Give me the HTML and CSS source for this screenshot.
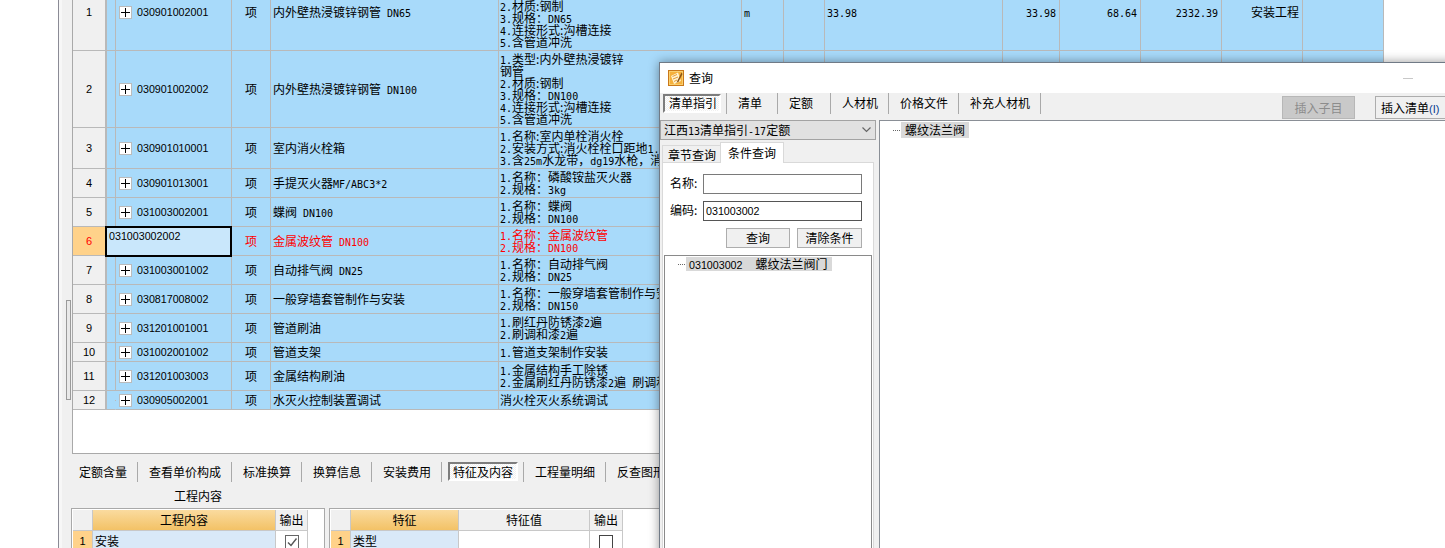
FILE: index.html
```html
<!DOCTYPE html>
<html lang="zh-CN">
<head>
<meta charset="utf-8">
<title>查询</title>
<link rel="stylesheet" href="styles.css">
</head>
<body>
<div class="app">
  <div class="gutter"></div>
  <div class="frame">
    <div class="strip"><div class="strip-thumb"></div></div>
    <div class="main">
      <div class="grid-box">
        <table class="grid">
          <colgroup>
            <col class="c-num"><col class="c-ind"><col class="c-code"><col class="c-unit"><col class="c-name"><col class="c-desc"><col class="c-u2"><col class="c-q1"><col class="c-q2"><col class="c-q3"><col class="c-p"><col class="c-t"><col class="c-k"><col class="c-e">
          </colgroup>
          <tr class="h77">
            <td class="num">1</td><td class="ind"><span class="tick"></span></td>
            <td class="code"><span class="plus"></span>030901002001</td><td class="ctr">项</td>
            <td>内外壁热浸镀锌钢管<i class="m"> DN65</i></td>
            <td class="desc"><i class="m">1.</i>类型:内外壁热浸镀锌<br>钢管<br><i class="m">2.</i>材质:钢制<br><i class="m">3.</i>规格：<i class="m">DN65</i><br><i class="m">4.</i>连接形式:沟槽连接<br><i class="m">5.</i>含管道冲洗</td>
            <td class="lft"><i class="m">m</i></td><td></td><td class="lft"><i class="m">33.98</i></td>
            <td class="rgt"><i class="m">33.98</i></td><td class="rgt"><i class="m">68.64</i></td><td class="rgt"><i class="m">2332.39</i></td><td class="rgt">安装工程</td><td></td>
          </tr>
          <tr class="h77">
            <td class="num">2</td><td class="ind"><span class="tick"></span></td>
            <td class="code"><span class="plus"></span>030901002002</td><td class="ctr">项</td>
            <td>内外壁热浸镀锌钢管<i class="m"> DN100</i></td>
            <td class="desc"><i class="m">1.</i>类型:内外壁热浸镀锌<br>钢管<br><i class="m">2.</i>材质:钢制<br><i class="m">3.</i>规格：<i class="m">DN100</i><br><i class="m">4.</i>连接形式:沟槽连接<br><i class="m">5.</i>含管道冲洗</td>
            <td></td><td></td><td></td><td></td><td></td><td></td><td></td><td></td>
          </tr>
          <tr class="h41">
            <td class="num">3</td><td class="ind"><span class="tick"></span></td>
            <td class="code"><span class="plus"></span>030901010001</td><td class="ctr">项</td>
            <td>室内消火栓箱</td>
            <td class="desc"><i class="m">1.</i>名称:室内单栓消火栓<br><i class="m">2.</i>安装方式:消火栓栓口距地<i class="m">1.1m</i><br><i class="m">3.</i>含<i class="m">25m</i>水龙带，<i class="m">dg19</i>水枪，消防按钮</td>
            <td></td><td></td><td></td><td></td><td></td><td></td><td></td><td></td>
          </tr>
          <tr class="h29">
            <td class="num">4</td><td class="ind"><span class="tick"></span></td>
            <td class="code"><span class="plus"></span>030901013001</td><td class="ctr">项</td>
            <td>手提灭火器<i class="m">MF/ABC3*2</i></td>
            <td class="desc"><i class="m">1.</i>名称：磷酸铵盐灭火器<br><i class="m">2.</i>规格：<i class="m">3kg</i></td>
            <td></td><td></td><td></td><td></td><td></td><td></td><td></td><td></td>
          </tr>
          <tr class="h29">
            <td class="num">5</td><td class="ind"><span class="tick"></span></td>
            <td class="code"><span class="plus"></span>031003002001</td><td class="ctr">项</td>
            <td>蝶阀<i class="m"> DN100</i></td>
            <td class="desc"><i class="m">1.</i>名称：蝶阀<br><i class="m">2.</i>规格：<i class="m">DN100</i></td>
            <td></td><td></td><td></td><td></td><td></td><td></td><td></td><td></td>
          </tr>
          <tr class="h29 active">
            <td class="num">6</td>
            <td class="editing" colspan="2">031003002002</td><td class="ctr">项</td>
            <td>金属波纹管<i class="m"> DN100</i></td>
            <td class="desc"><i class="m">1.</i>名称：金属波纹管<br><i class="m">2.</i>规格：<i class="m">DN100</i></td>
            <td></td><td></td><td></td><td></td><td></td><td></td><td></td><td></td>
          </tr>
          <tr class="h29">
            <td class="num">7</td><td class="ind"><span class="tick"></span></td>
            <td class="code"><span class="plus"></span>031003001002</td><td class="ctr">项</td>
            <td>自动排气阀<i class="m"> DN25</i></td>
            <td class="desc"><i class="m">1.</i>名称：自动排气阀<br><i class="m">2.</i>规格：<i class="m">DN25</i></td>
            <td></td><td></td><td></td><td></td><td></td><td></td><td></td><td></td>
          </tr>
          <tr class="h29">
            <td class="num">8</td><td class="ind"><span class="tick"></span></td>
            <td class="code"><span class="plus"></span>030817008002</td><td class="ctr">项</td>
            <td>一般穿墙套管制作与安装</td>
            <td class="desc"><i class="m">1.</i>名称：一般穿墙套管制作与安装<br><i class="m">2.</i>规格：<i class="m">DN150</i></td>
            <td></td><td></td><td></td><td></td><td></td><td></td><td></td><td></td>
          </tr>
          <tr class="h29">
            <td class="num">9</td><td class="ind"><span class="tick"></span></td>
            <td class="code"><span class="plus"></span>031201001001</td><td class="ctr">项</td>
            <td>管道刷油</td>
            <td class="desc"><i class="m">1.</i>刷红丹防锈漆<i class="m">2</i>遍<br><i class="m">2.</i>刷调和漆<i class="m">2</i>遍</td>
            <td></td><td></td><td></td><td></td><td></td><td></td><td></td><td></td>
          </tr>
          <tr class="h19">
            <td class="num">10</td><td class="ind"><span class="tick"></span></td>
            <td class="code"><span class="plus"></span>031002001002</td><td class="ctr">项</td>
            <td>管道支架</td>
            <td class="desc"><i class="m">1.</i>管道支架制作安装</td>
            <td></td><td></td><td></td><td></td><td></td><td></td><td></td><td></td>
          </tr>
          <tr class="h29">
            <td class="num">11</td><td class="ind"><span class="tick"></span></td>
            <td class="code"><span class="plus"></span>031201003003</td><td class="ctr">项</td>
            <td>金属结构刷油</td>
            <td class="desc"><i class="m">1.</i>金属结构手工除锈<br><i class="m">2.</i>金属刷红丹防锈漆<i class="m">2</i>遍<i class="m"> </i>刷调和漆<i class="m">2</i>遍</td>
            <td></td><td></td><td></td><td></td><td></td><td></td><td></td><td></td>
          </tr>
          <tr class="h19">
            <td class="num">12</td><td class="ind last"><span class="tick"></span></td>
            <td class="code"><span class="plus"></span>030905002001</td><td class="ctr">项</td>
            <td>水灭火控制装置调试</td>
            <td class="desc">消火栓灭火系统调试</td>
            <td></td><td></td><td></td><td></td><td></td><td></td><td></td><td></td>
          </tr>
        </table>
      </div>

      <div class="lower">
        <div class="tabs">
          <span class="tab">定额含量</span>
          <span class="tab">查看单价构成</span>
          <span class="tab">标准换算</span>
          <span class="tab">换算信息</span>
          <span class="tab">安装费用</span>
          <span class="tab pressed">特征及内容</span>
          <span class="tab">工程量明细</span>
          <span class="tab">反查图形</span>
        </div>
        <div class="section-title">工程内容</div>
        <div class="subgrids">
          <div class="subgrid sg-left">
            <table class="mini">
              <colgroup><col class="w20"><col class="w183"><col class="w31"></colgroup>
              <tr><th></th><th class="gold">工程内容</th><th>输出</th></tr>
              <tr><td class="rn">1</td><td class="val">安装</td><td class="chk"><span class="box on"><svg viewBox="0 0 12 12" width="12" height="12"><path d="M2 6.500 L5 9.500 L10.500 2.500" fill="none" stroke="#555" stroke-width="1.400"/></svg></span></td></tr>
            </table>
          </div>
          <div class="subgrid sg-right">
            <table class="mini">
              <colgroup><col class="w20"><col class="w108"><col class="w131"><col class="w33"></colgroup>
              <tr><th></th><th class="gold">特征</th><th>特征值</th><th>输出</th></tr>
              <tr><td class="rn">1</td><td class="val">类型</td><td class="blank"></td><td class="chk"><span class="box"></span></td></tr>
            </table>
          </div>
        </div>
      </div>
    </div>
  </div>
</div>

<div class="dialog">
  <div class="titlebar">
    <svg class="app-icon" viewBox="0 0 16 16" width="16" height="16">
      <rect x="0.500" y="0.500" width="15" height="15" fill="#f5b03c" stroke="#c9781a"/>
      <rect x="1.500" y="1.500" width="13" height="13" fill="none" stroke="#f9cf6e"/>
      <path d="M3 6 L10 2.500 L13 11 L6 14 Z" fill="#fff4d2"/>
      <path d="M4.500 6.500 L9 4.500 M5 9 L10 7 M6 11.500 L9 10" stroke="#e39a3a" stroke-width="1"/>
      <path d="M13.500 2.500 L9.500 10.500 L8.500 13 L10.800 11.300 L14.500 4 Z" fill="#8a5518"/>
    </svg>
    <span class="title-text">查询</span>
    <span class="minimize"></span>
  </div>
  <div class="toolbar">
    <span class="tool pressed-tool">清单指引</span>
    <span class="tool wide">清单</span>
    <span class="tool wider">定额</span>
    <span class="tool">人材机</span>
    <span class="tool">价格文件</span>
    <span class="tool">补充人材机</span>
    <button class="btn btn-off" type="button">插入子目</button>
    <button class="btn btn-on" type="button">插入清单<span class="hot">(I)</span></button>
  </div>
  <div class="dlg-body">
    <div class="dlg-left">
      <div class="select">
        <span>江西<i class="m">13</i>清单指引<i class="m">-17</i>定额</span>
        <svg viewBox="0 0 9 6" width="9" height="6"><path d="M0.500 0.500 L4.500 4.500 L8.500 0.500" fill="none" stroke="#666" stroke-width="1.200"/></svg>
      </div>
      <div class="qtabs">
        <span class="qtab">章节查询</span>
        <span class="qtab qtab-on">条件查询</span>
      </div>
      <div class="panel">
        <div class="field"><label class="flabel">名称:</label><input class="finput" type="text" value=""></div>
        <div class="field"><label class="flabel">编码:</label><input class="finput focus" type="text" value="031003002"></div>
        <div class="actions">
          <button class="btn act a-query" type="button">查询</button>
          <button class="btn act a-clear" type="button">清除条件</button>
        </div>
        <div class="result">
          <div class="result-row"><span class="dots"></span><span class="hit"><span class="sans">031003002</span><span class="hit-name">螺纹法兰阀门</span></span></div>
        </div>
      </div>
    </div>
    <div class="dlg-right">
      <div class="result-row right-row"><span class="dots"></span><span class="hit hit-r">螺纹法兰阀</span></div>
    </div>
  </div>
</div>
</body>
</html>
```

FILE: styles.css
```css
* { box-sizing: border-box; }
html, body { margin: 0; padding: 0; height: 548px; overflow: hidden; background: #fff; }
body {
  font-family: "Noto Sans CJK SC", "Liberation Sans", sans-serif;
  font-size: 12px;
  line-height: 12px;
  color: #000;
  position: relative;
}
.m {
  font-family: "DejaVu Sans Mono", "Liberation Mono", monospace;
  font-size: 10px;
  line-height: 8px;
  font-style: normal;
  white-space: pre;
}
.sans { font-family: "Liberation Sans", sans-serif; font-size: 10.7px; line-height: 8px; }

.app { display: flex; height: 548px; overflow: hidden; }
.gutter { width: 58px; flex: none; }
.frame { flex: 1; display: flex; min-width: 0; }
.strip {
  width: 14px; flex: none;
  border-left: 1px solid #8b8b95;
  background: linear-gradient(to right, #f7f7f7 0 3px, #f0f0f0 3px);
  padding: 300px 0 0 7px;
}
.strip-thumb { width: 5px; height: 100px; border: 1px solid #9a9a9a; background: #e9e9e9; }

.main { flex: 1; min-width: 0; display: flex; flex-direction: column; background: #f0f0f0; }
.grid-box {
  margin-top: -26px;
  height: 480px;
  flex: none;
  background: #fff;
  border-left: 1px solid #a9a9a9;
  border-bottom: 1px solid #a9a9a9;
  overflow: hidden;
}
.grid { table-layout: fixed; width: 1311px; border-collapse: separate; border-spacing: 0; }
.c-num { width: 34px; } .c-ind { width: 9px; } .c-code { width: 116px; } .c-unit { width: 39px; }
.c-name { width: 228px; } .c-desc { width: 243px; } .c-u2 { width: 42px; } .c-q1 { width: 41px; }
.c-q2 { width: 178px; } .c-q3 { width: 57px; } .c-p { width: 81px; } .c-t { width: 81px; }
.c-k { width: 81px; } .c-e { width: 81px; }

.grid td {
  background: #a8dafa;
  border-right: 1px solid #b9b9b9;
  border-bottom: 1px solid #b9b9b9;
  padding: 0 2px;
  white-space: nowrap;
  overflow: hidden;
  vertical-align: middle;
}
.h77 td { height: 77px; } .h41 td { height: 41px; } .h29 td { height: 29px; } .h19 td { height: 19px; }
.grid td.num {
  background: #f0f0f0;
  text-align: center;
  border-right: 2px solid #b9b9b9;
  font-family: "Liberation Sans", sans-serif;
  font-size: 11px;
}
.grid td.ind { position: relative; overflow: visible; padding: 0; }
.tick { display: block; position: absolute; right: -5px; top: 50%; width: 5px; border-top: 1px solid #b9b9b9; }
.grid td.ind.last { border-right-color: #a8dafa; }
.grid td.code {
  font-family: "Liberation Sans", sans-serif;
  font-size: 10.7px;
  padding: 0 0 0 3px;
  position: relative;
}
.plus {
  display: inline-block;
  width: 13px; height: 13px;
  margin-right: 5px;
  vertical-align: -3px;
  border: 1px solid #bbb;
  background:
    linear-gradient(#000, #000) center / 9px 1px no-repeat,
    linear-gradient(#000, #000) center / 1px 9px no-repeat,
    #fff;
}
.grid td.ctr { text-align: center; }
.grid td.desc { padding-left: 1px; }
.grid td.lft { padding-left: 2px; }
.grid td.rgt { text-align: right; padding-right: 3px; }
.active td { color: #f00; }
.grid .active td.num { background: #ffd28a; }
.grid td.editing {
  color: #000;
  background: #c9e7fb;
  font-family: "Liberation Sans", sans-serif;
  font-size: 10.7px;
  vertical-align: top;
  padding: 3px 0 0 2px;
  position: relative;
  overflow: visible;
}
.grid td.editing::after {
  content: "";
  position: absolute;
  left: -2px; right: -1px; top: -1px; bottom: -2px;
  border: 2px solid #000;
  z-index: 1;
}

.lower { flex: 1; min-height: 0; }
.tabs { display: flex; padding: 8px 0 0 7px; height: 29px; }
.tab {
  height: 20px; line-height: 20px;
  padding-right: 10px;
  margin-right: 11px;
  border-right: 1px solid #a9a9a9;
  white-space: nowrap;
}
.tab.pressed { position: relative; isolation: isolate; }
.tab.pressed::before {
  content: "";
  position: absolute;
  left: -5px; right: 5px; top: 0; bottom: 1px;
  border: 2px solid;
  border-color: #7d7d7d #fff #fff #7d7d7d;
  background: repeating-conic-gradient(#fff 0 25%, #f0f0f0 0 50%) 0 0 / 2px 2px;
  z-index: -1;
}
.section-title { padding-left: 102px; height: 25px; line-height: 26px; }
.subgrids { display: flex; gap: 4px; }
.subgrid { border: 1px solid #a9a9a9; border-bottom: 0; padding: 1px 0 0 1px; height: 60px; background: #fff; overflow: hidden; }
.sg-left { width: 254px; margin-left: -1px; }
.sg-right { width: 340px; }
.mini { table-layout: fixed; border-collapse: separate; border-spacing: 0; }
.w20 { width: 20px; } .w183 { width: 183px; } .w31 { width: 32px; }
.w108 { width: 108px; } .w131 { width: 131px; } .w33 { width: 33px; }
.mini th {
  height: 21px;
  font-weight: 400;
  background: #f0f0f0;
  border-right: 1px solid #c8c8c8;
  border-bottom: 1px solid #c8c8c8;
  padding: 0;
}
.mini th.gold { background: linear-gradient(#fadb9f, #f3c266); }
.mini td {
  height: 20px;
  border-right: 1px solid #c8c8c8;
  padding: 0 2px;
  vertical-align: middle;
}
.mini td.rn { background: #ffd28a; text-align: center; font-family: "Liberation Sans", sans-serif; font-size: 11px; }
.mini td.val { background: #d9e9f8; }
.mini td.blank { background: #fff; }
.mini td.chk { background: #fff; text-align: center; padding-top: 1px; }
.box { display: inline-block; width: 14px; height: 14px; border: 1px solid #444; background: #fff; vertical-align: middle; }
.box.on { border-color: #666; }
.box svg { display: block; margin: 0; }

.dialog {
  position: absolute;
  left: 659px; top: 62px;
  width: 800px; height: 500px;
  background: #f0f0f0;
  border: 1px solid #707a86;
  box-shadow: 0 0 10px rgba(0, 0, 0, .4);
  overflow: hidden;
}
.titlebar { height: 30px; background: #fff; display: flex; align-items: center; padding-left: 8px; }
.app-icon { flex: none; }
.title-text { margin-left: 5px; }
.minimize { margin-left: 690px; width: 10px; border-top: 1px solid #c8c8c8; }
.toolbar { height: 27px; display: flex; align-items: flex-start; padding-left: 9px; background: #f0f0f0; }
.tool {
  height: 21px; line-height: 20px;
  padding-right: 10px;
  margin-right: 11px;
  border-right: 1px solid #a9a9a9;
  white-space: nowrap;
}
.tool.wide { padding-right: 15px; }
.tool.wider { padding-right: 17px; }
.pressed-tool { position: relative; isolation: isolate; padding-right: 9px; }
.pressed-tool::before {
  content: "";
  position: absolute;
  left: -6px; right: 5px; top: 1px; bottom: 1px;
  border: 2px solid;
  border-color: #7d7d7d #fff #fff #7d7d7d;
  background: repeating-conic-gradient(#fff 0 25%, #f0f0f0 0 50%) 0 0 / 2px 2px;
  z-index: -1;
}
.btn {
  font: inherit;
  color: #000;
  background: #f0f0f0;
  border: 1px solid #adadad;
  padding: 0;
  border-radius: 0;
}
.btn-off { margin: 3px 0 0 230px; width: 73px; height: 23px; background: #c9c9c9; border-color: #b7b7b7; color: #8c8c8c; }
.btn-on { margin: 3px 0 0 20px; width: 72px; height: 23px; text-align: left; padding-left: 5px; }
.hot { font-family: "Liberation Sans", sans-serif; font-size: 11px; line-height: 8px; color: #0a3d91; }

.dlg-body { display: flex; height: 440px; }
.dlg-left { width: 219px; flex: none; }
.select {
  width: 216px; height: 20px;
  margin-left: 0;
  border: 1px solid #a3a3a3;
  background: #e1e1e1;
  display: flex; align-items: center; justify-content: space-between;
  padding: 0 3px 0 3px;
}
.select svg { margin-right: 1px; }
.qtabs { display: flex; align-items: flex-end; height: 22px; padding-left: 2px; }
.qtab {
  height: 17px; line-height: 18px;
  padding: 0 5px;
  background: #f0f0f0;
  border: 1px solid #d9d9d9;
  border-bottom: 0;
  width: 59px;
  white-space: nowrap;
  text-align: center;
}
.qtab-on { height: 21px; line-height: 20px; background: #fff; width: 64px; margin-left: -1px; position: relative; top: 1px; }
.panel {
  width: 212px; height: 400px;
  margin-left: 2px;
  background: #fff;
  border: 1px solid #d9d9d9;
  display: flex; flex-direction: column; gap: 7px;
  padding: 11px 0 0 1px;
}
.field { display: flex; align-items: center; padding-left: 6px; }
.flabel { width: 33px; flex: none; position: relative; top: -1px; }
.finput {
  width: 159px; height: 20px;
  border: 1px solid #7a7a7a;
  padding: 0 2px;
  font-family: "Liberation Sans", sans-serif;
  font-size: 10.7px;
  outline: 0;
  border-radius: 0;
  background: #fff;
}
.finput.focus { border-color: #555; }
.actions { display: flex; justify-content: flex-end; gap: 7px; padding-right: 11px; }
.act { height: 20px; }
.a-query { width: 64px; } .a-clear { width: 65px; }
.result { width: 208px; height: 300px; border: 1px solid #8a8a8a; background: #fff; padding: 1px 0 0 13px; }
.result-row { display: flex; align-items: center; }
.dots { width: 7px; margin-right: 1px; border-top: 1px dotted #666; }
.hit { background: #d9d9d9; height: 14px; line-height: 14px; display: inline-block; padding: 0 4px 0 3px; white-space: nowrap; }
.hit-name { margin-left: 13px; }
.dlg-right { flex: 1; background: #fff; border-left: 1px solid #8a8f96; border-top: 1px solid #8a8f96; padding: 1px 0 0 13px; margin-left: 0; }
.hit-r { height: 16px; line-height: 16px; padding: 0 0 0 4px; width: 68px; }
```
